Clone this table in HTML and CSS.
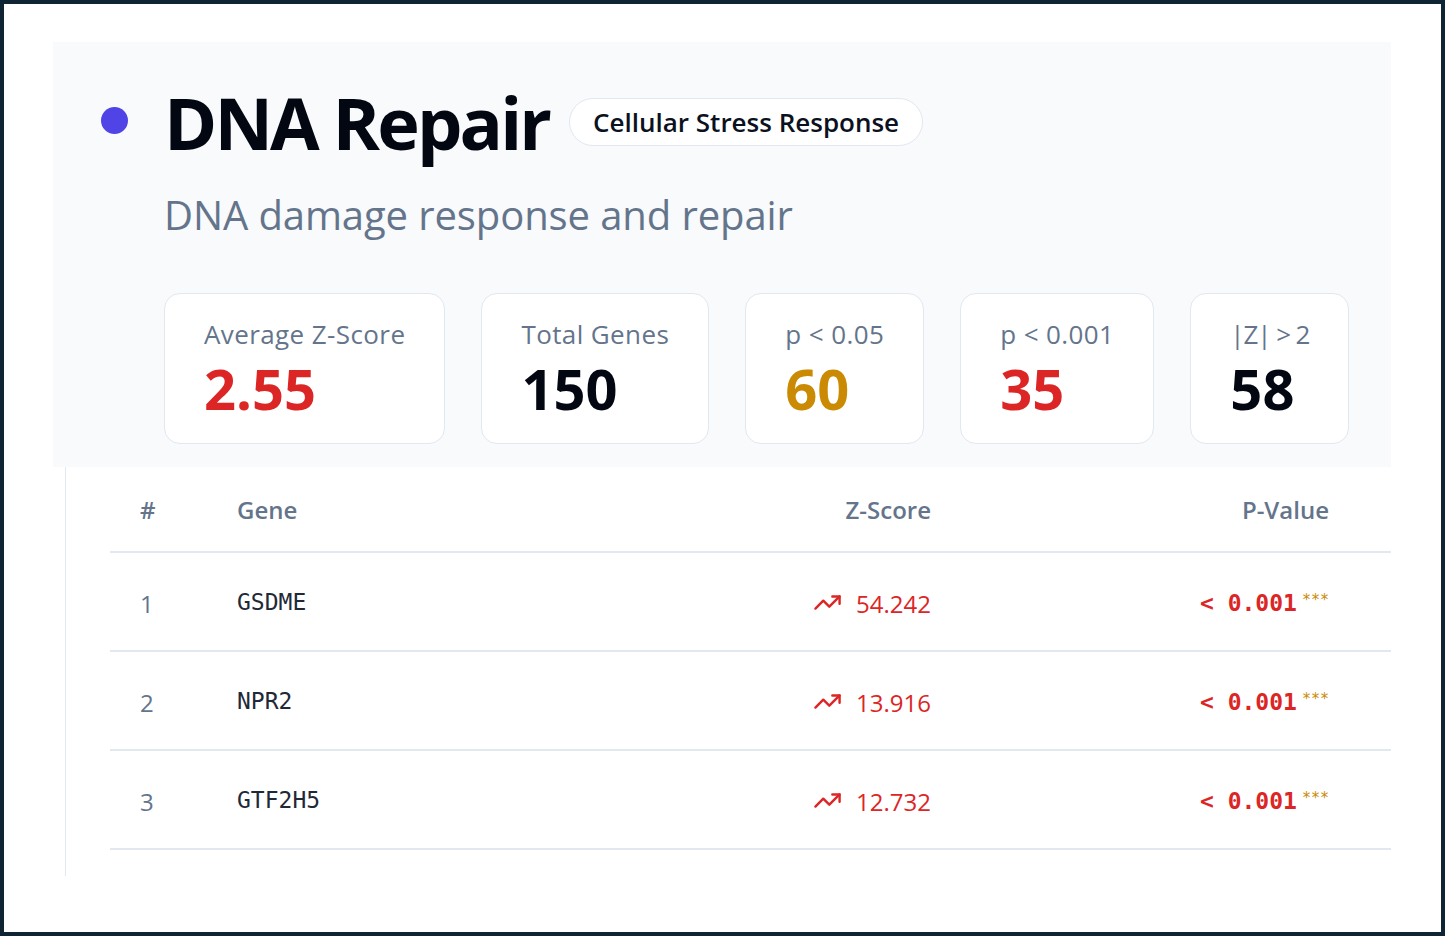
FILE: index.html
```html
<!DOCTYPE html>
<html lang="en">
<head>
<meta charset="utf-8">
<title>DNA Repair</title>
<link rel="stylesheet" href="styles.css">
</head>
<body>
<div class="frame">
  <section class="panel">
    <span class="dot"></span>
    <div class="panel-body">
      <div class="title-row">
        <h1 class="title">DNA Repair</h1>
        <span class="badge">Cellular Stress Response</span>
      </div>
      <p class="subtitle">DNA damage response and repair</p>
      <div class="stats">
        <div class="card"><div class="label">Average Z-Score</div><div class="value red">2.55</div></div>
        <div class="card"><div class="label">Total Genes</div><div class="value">150</div></div>
        <div class="card"><div class="label">p &lt; 0.05</div><div class="value gold">60</div></div>
        <div class="card"><div class="label">p &lt; 0.001</div><div class="value red">35</div></div>
        <div class="card"><div class="label tight">|Z| &gt; 2</div><div class="value">58</div></div>
      </div>
    </div>
  </section>
  <section class="table-wrap">
    <table class="genes">
      <colgroup>
        <col class="c-idx"><col class="c-gene"><col class="c-z"><col class="c-p">
      </colgroup>
      <thead>
        <tr><th class="idx">#</th><th>Gene</th><th class="num">Z-Score</th><th class="num pcol">P-Value</th></tr>
      </thead>
      <tbody>
        <tr>
          <td class="idx">1</td><td class="gene">GSDME</td>
          <td class="num z"><svg class="trend" viewBox="0 0 24 24"><polyline points="22 7 13.5 15.5 8.5 10.5 2 17"/><polyline points="16 7 22 7 22 13"/></svg>54.242</td>
          <td class="num pcol"><span class="pv">&lt; 0.001</span><span class="stars">***</span></td>
        </tr>
        <tr>
          <td class="idx">2</td><td class="gene">NPR2</td>
          <td class="num z"><svg class="trend" viewBox="0 0 24 24"><polyline points="22 7 13.5 15.5 8.5 10.5 2 17"/><polyline points="16 7 22 7 22 13"/></svg>13.916</td>
          <td class="num pcol"><span class="pv">&lt; 0.001</span><span class="stars">***</span></td>
        </tr>
        <tr>
          <td class="idx">3</td><td class="gene">GTF2H5</td>
          <td class="num z"><svg class="trend" viewBox="0 0 24 24"><polyline points="22 7 13.5 15.5 8.5 10.5 2 17"/><polyline points="16 7 22 7 22 13"/></svg>12.732</td>
          <td class="num pcol"><span class="pv">&lt; 0.001</span><span class="stars">***</span></td>
        </tr>
      </tbody>
    </table>
  </section>
</div>
</body>
</html>
```

FILE: styles.css
```css
* { box-sizing: border-box; }
html, body { margin: 0; padding: 0; }
body {
  font-family: "Open Sans", "Noto Sans", sans-serif;
  background: #ffffff;
}
.frame {
  width: 1445px;
  height: 936px;
  border: 4px solid #0f2533;
  background: #ffffff;
  padding: 38px 50px 0 49px;
}
.panel {
  background: #f8fafc;
  display: flex;
  align-items: flex-start;
  padding: 36px 0 23px 48px;
}
.dot {
  flex: none;
  width: 27px;
  height: 27px;
  border-radius: 50%;
  background: #5144e6;
  margin-top: 29px;
  margin-right: 36px;
}
.panel-body { display: flex; flex-direction: column; }
.title-row { display: flex; align-items: center; gap: 20px; }
.title {
  margin: 0;
  font-size: 72px;
  font-weight: 700;
  line-height: 88px;
  letter-spacing: -2.9px;
  color: #030712;
}
.badge {
  display: inline-block;
  border: 1.5px solid #e2e8f0;
  background: #ffffff;
  border-radius: 999px;
  padding: 6px 23px;
  font-size: 26px;
  font-weight: 600;
  line-height: 34px;
  color: #0b1120;
}
.subtitle {
  margin: 23px 0 0;
  font-size: 40px;
  line-height: 52px;
  color: #64748b;
  letter-spacing: -0.1px;
}
.stats { display: flex; gap: 36px; margin-top: 52px; }
.card {
  flex: none;
  white-space: nowrap;
  background: #ffffff;
  border: 1.5px solid #e2e8f0;
  border-radius: 16px;
  padding: 24px 39px 22px 39px;
  height: 151px;
}
.label {
  font-size: 26px;
  line-height: 32px;
  letter-spacing: 0.4px;
  color: #64748b;
}
.label.tight { letter-spacing: -1.1px; }
.value {
  font-size: 56px;
  font-weight: 700;
  line-height: 66px;
  margin-top: 5px;
  color: #030712;
}
.value.red { color: #dc2626; }
.value.gold { color: #ca8a04; }

.table-wrap {
  margin-left: 12px;
  width: 1326px;
  border-left: 1.5px solid #e2e8f0;
  padding-left: 44px;
  padding-bottom: 26px;
}
.genes {
  width: 100%;
  border-collapse: collapse;
  table-layout: fixed;
}
.c-idx { width: 97px; }
.c-gene { width: 454px; }
.c-z { width: 300px; }
.c-p { width: 430px; }
.genes th {
  text-align: left;
  font-size: 24px;
  font-weight: 600;
  color: #64748b;
  height: 85px;
  padding: 0 30px;
  border-bottom: 2px solid #e2e8f0;
  vertical-align: middle;
}
.genes td {
  height: 99px;
  padding: 0 30px;
  border-bottom: 2px solid #e2e8f0;
  vertical-align: middle;
  font-size: 24px;
}
.genes .num { text-align: right; }
.genes .pcol { padding-right: 62px; }
.genes td.idx { color: #64748b; padding-top: 4px; }
.genes td.gene {
  font-family: "DejaVu Sans Mono", monospace;
  font-size: 23px;
  color: #1f2937;
}
.genes td.z { color: #dc2626; padding-top: 4px; }
.trend {
  width: 29px;
  height: 29px;
  fill: none;
  stroke: #dc2626;
  stroke-width: 2;
  stroke-linecap: round;
  stroke-linejoin: round;
  vertical-align: -4px;
  margin-right: 14px;
}
.pv {
  font-family: "DejaVu Sans Mono", monospace;
  font-size: 23px;
  font-weight: 700;
  color: #dc2626;
}
.stars {
  font-family: "DejaVu Sans Mono", monospace;
  font-size: 15px;
  color: #ca8a04;
  margin-left: 5px;
  vertical-align: 6px;
}
```
